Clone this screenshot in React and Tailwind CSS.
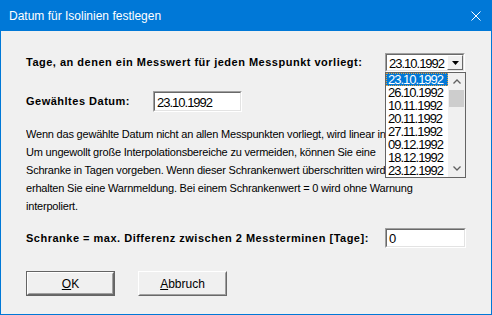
import React from 'react';

const dates = ['23.10.1992', '26.10.1992', '10.11.1992', '20.11.1992', '27.11.1992', '09.12.1992', '18.12.1992', '23.12.1992'];

function Sunken({ className = '', children }) {
  return (
    <div className={`border border-t-[#a0a0a0] border-l-[#a0a0a0] border-b-white border-r-white ${className}`}>
      <div className="h-full border border-t-[#696969] border-l-[#696969] border-b-[#e3e3e3] border-r-[#e3e3e3] bg-white flex items-center">
        {children}
      </div>
    </div>
  );
}

function Button({ children, isDefault = false }) {
  return (
    <div className={`w-[89px] h-[25px] ${isDefault ? 'border border-[#646464]' : ''}`}>
      <div className="h-full border border-t-white border-l-white border-b-[#696969] border-r-[#696969]">
        <div className="h-full border border-t-[#f0f0f0] border-l-[#f0f0f0] border-b-[#a0a0a0] border-r-[#a0a0a0] bg-[#f0f0f0] flex items-center justify-center text-[12px] text-black">
          {children}
        </div>
      </div>
    </div>
  );
}

function DateText({ children }) {
  return <span className="text-[13px] tracking-[-1px] text-black leading-none">{children}</span>;
}

export default function App() {
  return (
    <div className="w-[492px] h-[315px] flex flex-col border-x border-b border-[#0078d7] bg-[#f0f0f0] font-['Liberation_Sans',Arial,sans-serif] overflow-hidden">
      {/* Titelleiste */}
      <div className="h-[31px] shrink-0 bg-[#0078d7] flex items-center justify-between pl-[8px] pr-[10px]">
        <span className="text-white text-[12px]">Datum für Isolinien festlegen</span>
        <svg width="10" height="10" viewBox="0 0 10 10">
          <path d="M0.5 0.5 L9.5 9.5 M9.5 0.5 L0.5 9.5" stroke="white" strokeWidth="1" />
        </svg>
      </div>

      <div className="flex-1 pl-[25px] flex flex-col text-black">
        <div className="mt-[22px] h-[19px] flex items-center">
          <span className="w-[359px] text-[11px] font-bold tracking-[0.5px]">Tage, an denen ein Messwert für jeden Messpunkt vorliegt:</span>
          <div className="relative">
            <Sunken className="w-[80px] h-[19px]">
              <div className="flex-1 pl-[2px]"><DateText>23.10.1992</DateText></div>
              <div className="w-[16px] h-full border border-t-white border-l-white border-b-[#696969] border-r-[#696969] bg-[#f0f0f0] flex items-center justify-center">
                <svg width="7" height="4" viewBox="0 0 7 4"><path d="M0 0 H7 L3.5 4 Z" fill="black" /></svg>
              </div>
            </Sunken>
            {/* aufgeklappte Liste */}
            <div className="absolute left-0 top-full w-[81px] h-[106px] border border-[#646464] bg-white flex z-10">
              <div className="flex-1 flex flex-col">
                {dates.map((d, i) => (
                  <div
                    key={d}
                    className={`h-[13px] pl-[2px] flex items-center overflow-hidden ${i === 0 ? 'bg-[#0078d7] outline-1 outline-dotted outline-offset-[-1px] outline-[#e0a040]' : ''}`}
                  >
                    <span className={`text-[13px] tracking-[-1px] leading-[13px] ${i === 0 ? 'text-white' : 'text-black'}`}>{d}</span>
                  </div>
                ))}
              </div>
              <div className="w-[17px] bg-[#f0f0f0] flex flex-col">
                <div className="h-[17px] flex items-center justify-center">
                  <svg width="8" height="5" viewBox="0 0 8 5"><path d="M0.5 4.5 L4 1 L7.5 4.5" stroke="#606060" strokeWidth="1.3" fill="none" /></svg>
                </div>
                <div className="h-[17px] mx-[1px] bg-[#cdcdcd]" />
                <div className="flex-1" />
                <div className="h-[17px] flex items-center justify-center">
                  <svg width="8" height="5" viewBox="0 0 8 5"><path d="M0.5 0.5 L4 4 L7.5 0.5" stroke="#606060" strokeWidth="1.3" fill="none" /></svg>
                </div>
              </div>
            </div>
          </div>
        </div>

        <div className="mt-[19px] h-[21px] flex items-center">
          <span className="w-[127px] text-[11px] font-bold tracking-[0.5px]">Gewähltes Datum:</span>
          <Sunken className="w-[89px] h-[21px]">
            <div className="pl-[2px]"><DateText>23.10.1992</DateText></div>
          </Sunken>
        </div>

        {/* Hinweistext, die ersten Zeilen rechts von der offenen Liste verdeckt */}
        <div className="mt-[13px] text-[11px] leading-[18px] tracking-[-0.2px] whitespace-nowrap">
          <div className="w-[359px] overflow-hidden">Wenn das gewählte Datum nicht an allen Messpunkten vorliegt, wird linear interpoliert.</div>
          <div>Um ungewollt große Interpolationsbereiche zu vermeiden, können Sie eine</div>
          <div className="w-[359px] overflow-hidden">Schranke in Tagen vorgeben. Wenn dieser Schrankenwert überschritten wird,</div>
          <div>erhalten Sie eine Warnmeldung. Bei einem Schrankenwert = 0 wird ohne Warnung</div>
          <div>interpoliert.</div>
        </div>

        <div className="mt-[13px] h-[20px] flex items-center">
          <span className="w-[359px] text-[11px] font-bold tracking-[0.5px]">Schranke = max. Differenz zwischen 2 Messterminen [Tage]:</span>
          <Sunken className="w-[81px] h-[20px]">
            <div className="pl-[2px]"><DateText>0</DateText></div>
          </Sunken>
        </div>

        <div className="mt-[23px] flex gap-[23px]">
          <Button isDefault><span><span className="underline">O</span>K</span></Button>
          <Button><span><span className="underline">A</span>bbruch</span></Button>
        </div>
      </div>
    </div>
  );
}
